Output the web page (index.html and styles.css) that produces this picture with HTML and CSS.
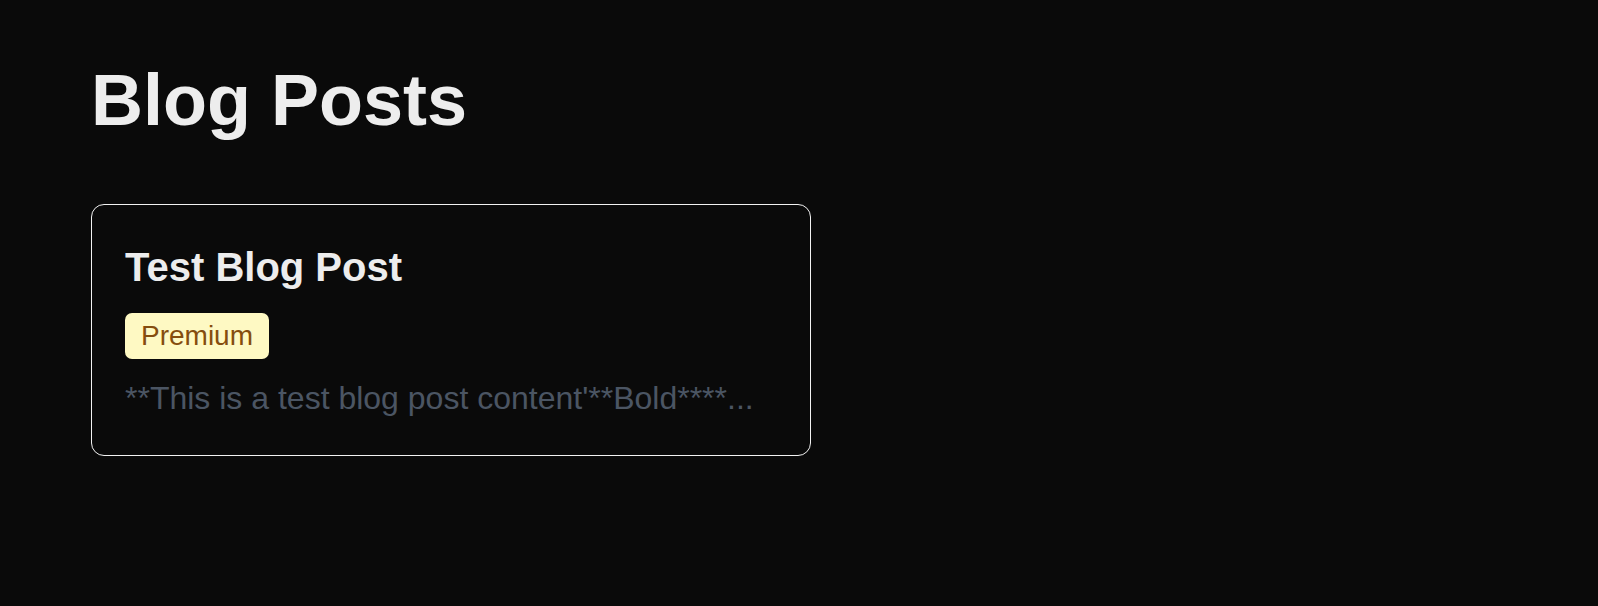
FILE: index.html
```html
<!DOCTYPE html>
<html lang="en">
<head>
<meta charset="utf-8">
<title>Blog Posts</title>
<link rel="stylesheet" href="styles.css">
</head>
<body>
<main class="page">
  <h1 class="page-title">Blog Posts</h1>
  <div class="post-list">
    <article class="post-card">
      <h2 class="post-title">Test Blog Post</h2>
      <span class="badge">Premium</span>
      <p class="post-excerpt">**This is a test blog post content'**Bold****...</p>
    </article>
  </div>
</main>
</body>
</html>
```

FILE: styles.css
```css
* {
  box-sizing: border-box;
}

html, body {
  margin: 0;
  padding: 0;
  background: #0a0a0a;
  color: #ededed;
  font-family: "Liberation Sans", Arial, Helvetica, sans-serif;
}

.page {
  padding: 57px 91px 40px 91px;
}

.page-title {
  margin: 0 0 61px 0;
  font-size: 72px;
  line-height: 1.2;
  font-weight: 700;
  color: #ededed;
}

.post-list {
  display: flex;
  flex-direction: column;
  gap: 24px;
}

.post-card {
  width: 720px;
  border: 1.5px solid #f2f2f2;
  border-radius: 13px;
  padding: 32px 33px 33px 33px;
  display: flex;
  flex-direction: column;
  align-items: flex-start;
}

.post-title {
  margin: 0 0 16px 0;
  font-size: 40px;
  line-height: 60px;
  font-weight: 700;
  color: #ededed;
}

.badge {
  display: inline-block;
  background: #fef9c3;
  color: #854d0e;
  font-size: 28px;
  line-height: 42px;
  padding: 2px 16px;
  border-radius: 7px;
}

.post-excerpt {
  margin: 15px 0 0 0;
  font-size: 32px;
  line-height: 48px;
  color: #4b5563;
}
```
